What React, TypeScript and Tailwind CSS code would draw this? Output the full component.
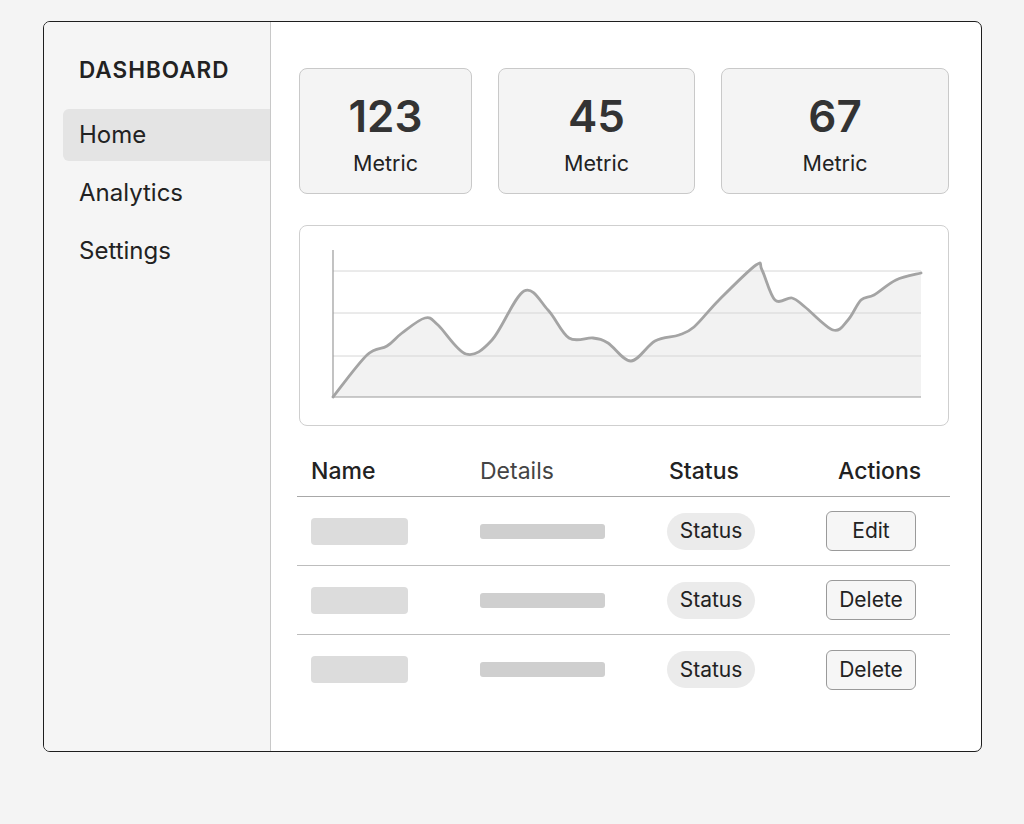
import React from "react";

const pts: [number, number][] = [
  [333, 397], [367, 355], [387, 346], [402, 333], [425, 318], [438, 325],
  [466, 354], [492, 340], [524, 291], [548, 310], [569, 338], [593, 338],
  [608, 343], [631, 361], [655, 341], [679, 335], [694, 327], [719, 300],
  [756, 265], [762, 270], [775, 300], [792, 298], [805, 307], [833, 330],
  [848, 320], [861, 300], [874, 295], [896, 280], [921, 273],
];

function smooth(p: [number, number][]) {
  let d = `M${p[0][0]},${p[0][1]}`;
  for (let i = 0; i < p.length - 1; i++) {
    const p0 = p[i - 1] || p[i];
    const p1 = p[i];
    const p2 = p[i + 1];
    const p3 = p[i + 2] || p2;
    const c1x = p1[0] + (p2[0] - p0[0]) / 6;
    const c1y = p1[1] + (p2[1] - p0[1]) / 6;
    const c2x = p2[0] - (p3[0] - p1[0]) / 6;
    const c2y = p2[1] - (p3[1] - p1[1]) / 6;
    d += ` C${c1x.toFixed(1)},${c1y.toFixed(1)} ${c2x.toFixed(1)},${c2y.toFixed(1)} ${p2[0]},${p2[1]}`;
  }
  return d;
}

function Chart() {
  const line = smooth(pts);
  const area = `${line} L921,397 L333,397 Z`;
  return (
    <svg width="648" height="199" viewBox="300 226 648 199" className="block">
      <path d={area} fill="#f2f2f2" />
      {[271, 313, 356].map((y) => (
        <line key={y} x1="333" x2="921" y1={y} y2={y} stroke="#d6d6d6" strokeWidth="1" />
      ))}
      <line x1="333" x2="333" y1="250" y2="397" stroke="#9a9a9a" strokeWidth="1.2" />
      <line x1="333" x2="921" y1="397" y2="397" stroke="#9a9a9a" strokeWidth="1.2" />
      <path d={line} fill="none" stroke="#a4a4a4" strokeWidth="2.8" strokeLinejoin="round" strokeLinecap="round" />
    </svg>
  );
}

function MetricCard({ value, w }: { value: string; w: string }) {
  return (
    <div className={`${w} h-[126px] bg-[#f4f4f4] border border-[#c9c9c9] rounded-[8px] flex flex-col items-center pt-[22px]`}>
      <div className="text-[44px] leading-[50px] font-semibold text-[#333]">{value}</div>
      <div className="text-[21.5px] leading-[28px] text-[#222] mt-[8px]">Metric</div>
    </div>
  );
}

function Row({ action, last }: { action: string; last?: boolean }) {
  return (
    <div className={`h-[69px] grid grid-cols-[169px_187px_159px_1fr] items-center pl-[14px] ${last ? "" : "border-b border-[#bdbdbd]"}`}>
      <div className="w-[97px] h-[27px] bg-[#dcdcdc] rounded-[4px]" />
      <div className="w-[125px] h-[15px] bg-[#cfcfcf] rounded-[3px]" />
      <div className="w-[88px] h-[37px] bg-[#ebebeb] rounded-full flex items-center justify-center text-[21px] text-[#222]">Status</div>
      <div className="w-[90px] h-[40px] bg-[#f6f6f6] border border-[#9a9a9a] rounded-[6px] flex items-center justify-center text-[21px] text-[#222]">{action}</div>
    </div>
  );
}

export default function App() {
  return (
    <div className="w-[1024px] h-[824px] bg-[#f4f4f4] pt-[21px] pl-[43px]" style={{ fontFamily: "Inter, 'Noto Sans', sans-serif" }}>
      <div className="w-[939px] h-[731px] bg-white border-[1.5px] border-[#1e1e1e] rounded-[7px] flex overflow-hidden">
        <aside className="w-[227px] shrink-0 bg-[#f5f5f5] border-r border-[#c8c8c8] pt-[34px]">
          <div className="pl-[35px] h-[28px] leading-[28px] text-[22.5px] font-semibold text-[#222] tracking-[0.045em] mb-[25px]">DASHBOARD</div>
          <div className="flex flex-col gap-[6px] pl-[19px]">
            <div className="h-[52px] bg-[#e4e4e4] rounded-l-[6px] flex items-center pl-[16px] text-[24px] text-[#222]">Home</div>
            <div className="h-[52px] flex items-center pl-[16px] text-[24px] text-[#222]">Analytics</div>
            <div className="h-[52px] flex items-center pl-[16px] text-[24px] text-[#222]">Settings</div>
          </div>
        </aside>
        <main className="flex-1 pt-[46px] pl-[28px]">
          <div className="flex gap-[26px]">
            <MetricCard value="123" w="w-[173px]" />
            <MetricCard value="45" w="w-[197px]" />
            <MetricCard value="67" w="w-[228px]" />
          </div>
          <div className="mt-[31px] w-[650px] h-[201px] border border-[#cfcfcf] rounded-[8px] overflow-hidden">
            <Chart />
          </div>
          <div className="mt-[20px] -ml-[2px] w-[653px]">
            <div className="h-[51px] grid grid-cols-[169px_187px_159px_1fr] items-center pl-[14px] border-b border-[#a8a8a8] text-[23px] text-[#222]">
              <div className="font-medium">Name</div>
              <div className="text-[#444]">Details</div>
              <div className="font-medium pl-[2px]">Status</div>
              <div className="font-medium pl-[12px]">Actions</div>
            </div>
            <Row action="Edit" />
            <Row action="Delete" />
            <Row action="Delete" last />
          </div>
        </main>
      </div>
    </div>
  );
}
